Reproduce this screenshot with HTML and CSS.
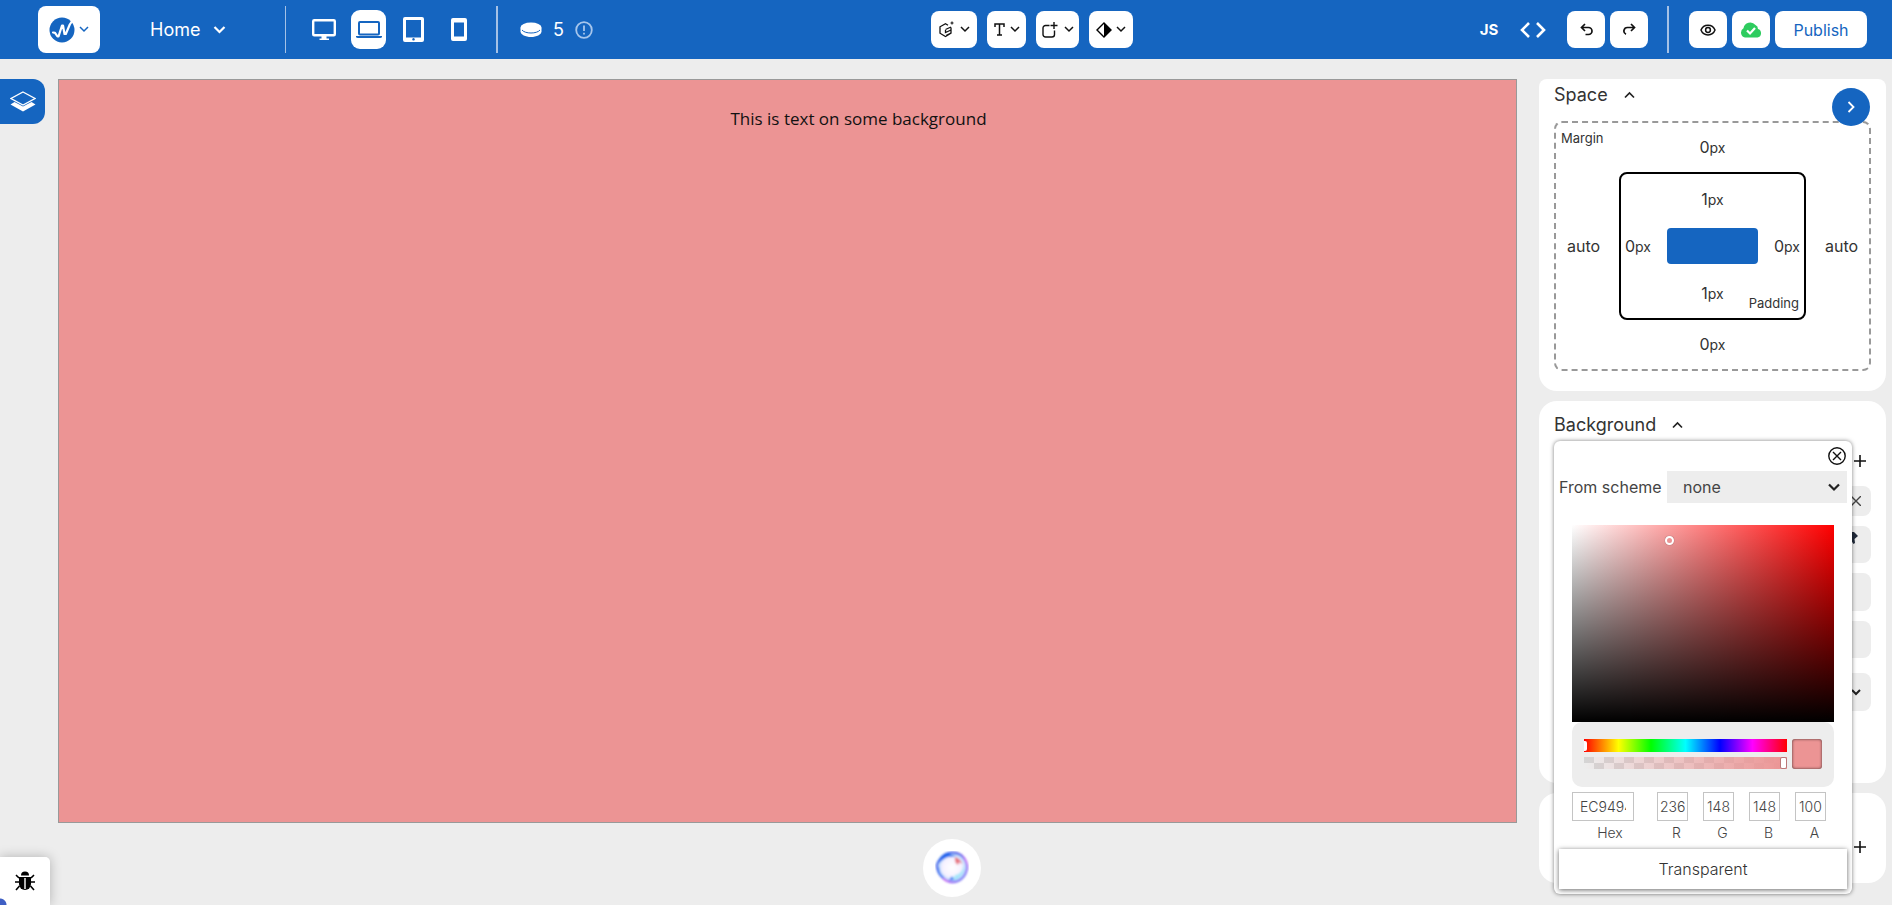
FILE: index.html
```html
<!DOCTYPE html>
<html lang="en">
<head>
<meta charset="utf-8">
<title>Site editor</title>
<link rel="stylesheet" href="styles.css">
</head>
<body>
<svg class="defs" aria-hidden="true">
  <symbol id="chev" viewBox="0 0 10 10"><path d="M1 3l4 4 4-4" fill="none" stroke="currentColor" stroke-width="1.5"/></symbol>
  <symbol id="plus" viewBox="0 0 12 12"><path d="M6 0v12M0 6h12" stroke="currentColor" stroke-width="1.6"/></symbol>
</svg>
<header class="topbar">
  <div class="group left">
    <button class="tile logo" aria-label="Main menu">
      <svg width="26" height="26" viewBox="0 0 26 26"><circle cx="13" cy="13" r="12.5" fill="#1565c0"/><path d="M4 15.500l2 .3 2.500 3.700 1 0 3.500-11 1 0 1.500 8.500 1.300 0 4-9.500 2-3" fill="none" stroke="#fff" stroke-width="2.200" stroke-linejoin="round" stroke-linecap="round"/></svg>
      <svg class="chev blue" width="10" height="10"><use href="#chev"/></svg>
    </button>
    <button class="bare page"><span>Home</span><svg width="13" height="13" viewBox="0 0 13 13"><path d="M1.500 4l5 5 5-5" fill="none" stroke="#fff" stroke-width="2.200"/></svg></button>
    <i class="divider thin"></i>
    <div class="devices">
      <button class="bare device" aria-label="Desktop"><svg width="24" height="22" viewBox="0 0 24 22"><rect x="1.200" y="1.200" width="21.600" height="15" rx="1" fill="none" stroke="#fff" stroke-width="2.400"/><path d="M9.500 17h5v2.500h2.500V21H7.500v-1.500h2z" fill="#fff"/></svg></button>
      <button class="bare device active" aria-label="Laptop"><svg width="26" height="18" viewBox="0 0 26 18"><rect x="3" y="1" width="20" height="12.500" rx="1" fill="none" stroke="#1565c0" stroke-width="2"/><path d="M0 15h26v.5q0 1.500-2 1.500H2q-2 0-2-1.500z" fill="#1565c0"/></svg></button>
      <button class="bare device" aria-label="Tablet"><svg width="21" height="25" viewBox="0 0 21 25"><path fill-rule="evenodd" d="M2 0h17a2 2 0 0 1 2 2v21a2 2 0 0 1-2 2H2a2 2 0 0 1-2-2V2a2 2 0 0 1 2-2zm1 3v17.500h15V3zm7.500 18a1.300 1.300 0 1 0 .01 0z" fill="#fff"/></svg></button>
      <button class="bare device" aria-label="Phone"><svg width="16" height="23" viewBox="0 0 16 23"><path fill-rule="evenodd" d="M2 0h12a2 2 0 0 1 2 2v19a2 2 0 0 1-2 2H2a2 2 0 0 1-2-2V2a2 2 0 0 1 2-2zm1 4.500v14h10v-14z" fill="#fff"/></svg></button>
    </div>
    <i class="divider"></i>
    <div class="credits">
      <svg width="22" height="16" viewBox="0 0 22 16"><ellipse cx="11" cy="5.500" rx="10.500" ry="5" fill="#fff"/><path d="M.5 6v3.500c0 3 5 5.500 10.500 5.500s10.500-2.500 10.500-5.500V6z" fill="#fff"/><path d="M2 8c3 4 15 4 18 0" fill="none" stroke="#1565c0" stroke-width="1"/></svg>
      <span>5</span>
      <svg width="18" height="18" viewBox="0 0 18 18" stroke="#a7c6ec" fill="none" stroke-width="1.800"><circle cx="9" cy="9" r="7.800"/><path d="M9 4.500v5.500M9 11.700v1.800"/></svg>
    </div>
  </div>
  <div class="group tools">
    <button class="tile tool box" aria-label="Add block"><svg width="15" height="17" viewBox="0 0 15 17" fill="none" stroke="#111" stroke-width="1.300"><path d="M9 4.200L6.500 2.700 1 5.800v6.400l5.500 3.300 5.500-3.300V6.500M6.500 8.500L12 6M6.500 9v2.500L12 9M7 14.500l5-2.500"/><path d="M13 .5v3M11.500 2h3" stroke-width="1.100"/></svg><svg class="chev" width="10" height="10"><use href="#chev"/></svg></button>
    <button class="tile tool text" aria-label="Add text"><svg width="11" height="13" viewBox="0 0 11 13" fill="none" stroke="#111" stroke-width="1.500"><path d="M1 4V1h9v3M5.500 1v11M3 12h5"/></svg><svg class="chev" width="10" height="10"><use href="#chev"/></svg></button>
    <button class="tile tool shape" aria-label="Add container"><svg width="16" height="16" viewBox="0 0 16 16" fill="none" stroke="#111" stroke-width="1.400"><path d="M7.500 3.500H3.500a2.500 2.500 0 0 0-2.500 2.500v6.500A2.500 2.500 0 0 0 3.500 15H10a2.500 2.500 0 0 0 2.500-2.500V8.500M12 0v7M8.500 3.500h7"/></svg><svg class="chev" width="10" height="10"><use href="#chev"/></svg></button>
    <button class="tile tool theme" aria-label="Colour scheme"><svg width="16" height="16" viewBox="0 0 16 16"><path d="M8 1l7 7-7 7-7-7z" fill="none" stroke="#000" stroke-width="1.400"/><path d="M8 1l7 7-7 7z"/></svg><svg class="chev" width="10" height="10"><use href="#chev"/></svg></button>
  </div>
  <div class="group right">
    <button class="bare js">JS</button>
    <button class="bare code" aria-label="Code"><svg width="26" height="16" viewBox="0 0 26 16" fill="none" stroke="#fff" stroke-width="2.600"><path d="M9 1L2 8l7 7M17 1l7 7-7 7"/></svg></button>
    <div class="pair">
      <button class="tile action" aria-label="Undo"><svg width="13" height="13" viewBox="0 0 13 13" fill="none" stroke="#111" stroke-width="1.700"><path d="M5 1L1.500 4.500 5 8M1.500 4.500H8.500a3.500 3.500 0 0 1 0 7H5.500"/></svg></button>
      <button class="tile action" aria-label="Redo"><svg width="13" height="13" viewBox="0 0 13 13" fill="none" stroke="#111" stroke-width="1.700"><path d="M8 1l3.500 3.500L8 8M11.500 4.500H4.500a3.500 3.500 0 0 0-1.500 6.700"/></svg></button>
    </div>
    <i class="divider"></i>
    <div class="pair">
      <button class="tile action" aria-label="Preview"><svg width="16" height="12" viewBox="0 0 16 12" fill="none" stroke="#111" stroke-width="1.500"><path d="M1 6c2.500-6.500 11.500-6.500 14 0-2.500 6.500-11.500 6.500-14 0z"/><circle cx="8" cy="6" r="2.400"/></svg></button>
      <button class="tile action" aria-label="Saved"><svg width="22" height="16" viewBox="0 0 22 16"><path d="M5 15.500a5 5 0 0 1-1.500-9.200A6.800 6.800 0 0 1 15.500 3a4.500 4.500 0 0 1 2.500 4 4.400 4.400 0 0 1-.5 8.500z" fill="#2ecc5f"/><path d="M7 8.500l3 3 5-5.500" fill="none" stroke="#fff" stroke-width="2.200"/></svg></button>
      <button class="tile publish">Publish</button>
    </div>
  </div>
</header>
<div class="workspace">
  <main class="stage">
    <div class="rail"><button class="layers" aria-label="Layers"><svg width="26" height="21" viewBox="0 0 26 21"><path d="M13 1l12 6.500L13 14 1 7.500z" fill="none" stroke="#fff" stroke-width="1.300"/><path d="M.5 13.500L4.500 11l8.500 4.500 8.500-4.500 4 2.500L13 20.500z" fill="#fff"/></svg></button></div>
    <section class="canvas"><p>This is text on some background</p></section>
  </main>
  <aside class="sidebar">
    <section class="card first">
      <h2>Space <svg width="11" height="8" viewBox="0 0 11 8"><path d="M1 6.500l4.500-4.500L10 6.500" fill="none" stroke="#222" stroke-width="1.700"/></svg></h2>
      <button class="collapse" aria-label="Collapse panel"><svg width="8" height="12" viewBox="0 0 8 12"><path d="M1.500 1l5 5-5 5" fill="none" stroke="#fff" stroke-width="1.800"/></svg></button>
      <div class="margin-box">
        <span class="tag margin-tag">Margin</span>
        <span class="top">0<small>px</small></span>
        <span class="side">auto</span>
        <div class="padding-box">
          <span class="top">1<small>px</small></span>
          <span class="side">0<small>px</small></span>
          <i class="core"></i>
          <span class="side">0<small>px</small></span>
          <span class="top">1<small>px</small></span>
          <span class="tag padding-tag">Padding</span>
        </div>
        <span class="side end">auto</span>
        <span class="top">0<small>px</small></span>
      </div>
    </section>
    <section class="card background">
      <h2>Background <svg width="11" height="8" viewBox="0 0 11 8"><path d="M1 6.500l4.500-4.500L10 6.500" fill="none" stroke="#222" stroke-width="1.700"/></svg></h2>
      <div class="fields">
        <button class="bare add" aria-label="Add background"><svg width="12" height="12"><use href="#plus"/></svg></button>
        <div class="field short"><svg width="10" height="10" viewBox="0 0 10 10"><path d="M0 0l10 10M10 0L0 10" stroke="#444" stroke-width="1.400"/></svg></div>
        <div class="field drop"><svg width="12" height="12" viewBox="0 0 12 12"><path d="M2 0h6l4 4-3.500 3 .5 4-1.500 1-2-3z" fill="#222b3b"/></svg></div>
        <div class="field"></div>
        <div class="field last"></div>
        <div class="field"><svg width="10" height="8" viewBox="0 0 10 8"><path d="M1 2l4 4 4-4" fill="none" stroke="#222" stroke-width="2"/></svg></div>
      </div>
      <div class="picker">
        <button class="bare close" aria-label="Close"><svg width="18" height="18" viewBox="0 0 18 18" fill="none" stroke="#111" stroke-width="1.400"><circle cx="9" cy="9" r="8.200"/><path d="M5 5l8 8M13 5l-8 8"/></svg></button>
        <div class="scheme">
          <label for="scheme">From scheme</label>
          <div class="select"><select id="scheme"><option>none</option></select><svg width="12" height="9" viewBox="0 0 12 9"><path d="M1 1.500l5 5 5-5" fill="none" stroke="#222" stroke-width="2.200"/></svg></div>
        </div>
        <div class="picker-body">
          <div class="shade"><i class="cursor"></i></div>
          <div class="sliders">
            <div class="tracks">
              <input class="hue" type="range" aria-label="Hue" min="0" max="360" value="0">
              <input class="alpha" type="range" aria-label="Opacity" min="0" max="100" value="100">
            </div>
            <i class="swatch"></i>
          </div>
          <div class="values">
            <label class="hex"><input value="EC9494"><span>Hex</span></label>
            <label><input value="236"><span>R</span></label>
            <label><input value="148"><span>G</span></label>
            <label><input value="148"><span>B</span></label>
            <label><input value="100"><span>A</span></label>
          </div>
        </div>
        <button class="transparent">Transparent</button>
      </div>
    </section>
    <section class="card extra"><button class="bare add" aria-label="Add item"><svg width="12" height="12"><use href="#plus"/></svg></button></section>
  </aside>
</div>
<button class="assistant" aria-label="Assistant">
  <svg width="34" height="34" viewBox="0 0 34 34">
    <defs><linearGradient id="orb" x1="0" y1="0" x2="1" y2="1"><stop offset="0" stop-color="#1268ec"/><stop offset=".4" stop-color="#3b3be6"/><stop offset=".6" stop-color="#c35af5"/><stop offset="1" stop-color="#4b7df5"/></linearGradient>
    <radialGradient id="glow"><stop offset="0" stop-color="#fff"/><stop offset=".65" stop-color="#f6f1ff"/><stop offset="1" stop-color="#a5d4fb"/></radialGradient>
    <filter id="soft"><feGaussianBlur stdDeviation="0.9"/></filter></defs>
    <g filter="url(#soft)"><path d="M11 3q8-3 15 1 7 6 6 14-2 9-9 12-8 3-14-2Q2 22 2 14q3-8 9-11z" fill="url(#glow)" stroke="url(#orb)" stroke-width="2"/><path d="M4 12q3-7 9-9l8 2q-4 1-8 1-4 1-9 6z" fill="#1769ee"/><path d="M20 6q6 2 7 7l-3-2-1 3q-4-3-3-8z" fill="#e4525e" opacity=".8"/><path d="M29 14q1 9-7 14l-5 1 3-5q7-1 9-10z" fill="#64dff5" opacity=".5"/><path d="M4 15q0 8 5 11l-1 1q-7-4-4-12zM14 29l3-4 2 4z" fill="#237cf5"/></g>
  </svg>
</button>
<button class="debug" aria-label="Debug"><svg width="20" height="20" viewBox="0 0 20 20"><path d="M6 4.500a4 4 0 0 1 8 0z"/><path d="M4 6h12v7a6 6 0 0 1-12 0z"/><path d="M4 7L1 4M16 7l3-3M4 11H0M16 11h4M4.500 15L1 19M15.500 15l3.500 4" stroke="#000" stroke-width="1.600"/><path d="M10 7v11" stroke="#fff" stroke-width="1.400"/></svg></button>
</body>
</html>
```

FILE: styles.css
```css
* { box-sizing: border-box; }
body { margin: 0; height: 100vh; display: flex; flex-direction: column; overflow: hidden; background: #ededed; color: #333; font: 16px/24px Inter, "Open Sans", sans-serif; }
button, input, select { font: inherit; color: inherit; }
button { padding: 0; border: 0; background: none; cursor: pointer; display: flex; align-items: center; justify-content: center; }
svg { flex: none; display: block; }
.defs { position: absolute; width: 0; height: 0; }

.topbar { flex: none; height: 59px; display: flex; align-items: center; justify-content: space-between; padding: 0 25px 0 38px; background: #1565c0; color: #fff; }
.group { display: flex; align-items: center; }
.left { width: 564px; }
.tile { height: 37px; background: #fff; border-radius: 8px; color: #111; }
.logo { width: 62px; height: 47px; gap: 4px; }
.blue { color: #1565c0; }
.page { width: 76px; margin: 0 59px 0 50px; justify-content: space-between; font-size: 18px; }
.divider { width: 2px; height: 47px; background: #a4c1e6; }
.thin { width: 1px; }
.devices { display: flex; align-items: center; gap: 10px; margin: 0 20px; }
.device { width: 35px; height: 39px; border-radius: 9px; }
.active { background: #fff; }
.credits { display: flex; align-items: center; gap: 11px; margin-left: 22px; font-size: 18px; }

.tools { gap: 10px; margin-right: 18px; }
.tool { gap: 6px; }
.box { width: 46px; }
.text { width: 39px; gap: 5px; }
.shape { width: 43px; }
.theme { width: 44px; gap: 4px; }
.chev { margin-bottom: 2px; }

.js { font-weight: 700; font-size: 15px; width: 18px; }
.code { margin: 0 21px 0 22px; }
.pair { display: flex; gap: 5px; }
.action { width: 38px; }
.right .divider { margin: 0 20px 0 19px; }
.publish { width: 92px; color: #1565c0; }

.workspace { flex: 1; min-height: 0; display: flex; gap: 22px; padding: 20px 6px 0 0; }
.stage { flex: 1; display: flex; padding-bottom: 82px; }
.rail { width: 58px; }
.layers { width: 45px; height: 45px; background: #1565c0; border-radius: 0 12px 12px 0; }
.canvas { flex: 1; padding-left: 142px; background: #ec9494; border: 1px solid #999; color: #111; text-align: center; }
.canvas p { margin: 26px 0; font: 17px/26px "Open Sans", sans-serif; }

.sidebar { width: 347px; display: flex; flex-direction: column; gap: 10px; }
.card { position: relative; padding: 12px 15px; background: #fff; border-radius: 18px; }
.card h2 { display: flex; align-items: center; gap: 16px; margin: 0; font-size: 18px; line-height: 24px; font-weight: 400; }
.first { padding: 4px 15px 20px; border-radius: 8px 8px 18px 18px; }
.collapse { position: absolute; z-index: 1; top: 9px; right: 16px; width: 38px; height: 38px; border-radius: 50%; background: #1565c0; }
.margin-box { position: relative; margin-top: 14px; height: 250px; display: grid; grid-template: 49px 148px 49px / 63px 1fr 63px; align-items: center; justify-items: center; border: 2px dashed #999; border-radius: 8px; }
.top { grid-column: 1 / -1; }
.top small, .side small { font-size: 14px; }
.side { justify-self: start; width: 55px; text-align: center; }
.end { justify-self: end; }
.tag { position: absolute; font-size: 13px; line-height: 18px; }
.margin-tag { top: 6px; left: 5px; }
.padding-tag { right: 5px; bottom: 6px; }
.padding-box { position: relative; width: 187px; height: 148px; display: grid; grid-template: 50px 1fr 50px / 34px 1fr 34px; align-items: center; justify-items: center; border: 2px solid #000; border-radius: 8px; }
.padding-box .side { width: 34px; }
.core { width: 91px; height: 36px; background: #1565c0; border-radius: 4px; }

.background { padding-bottom: 72px; }
.fields { display: flex; flex-direction: column; gap: 10px; margin-top: 18px; }
.add { width: 12px; height: 12px; margin: 0 5px 9px auto; color: #111; }
.field { height: 38px; padding-right: 10px; display: flex; align-items: center; justify-content: flex-end; background: #ededed; border-radius: 8px; }
.short { height: 30px; }
.drop { height: 37px; padding-right: 13px; padding-bottom: 14px; }
.last { height: 37px; margin-bottom: 5px; }
.extra { padding: 48px 15px 21px; }

.picker { position: absolute; z-index: 2; top: 40px; left: 15px; width: 298px; padding: 6px 5px 5px; background: #fff; border-radius: 6px; box-shadow: 0 0 4px rgba(0,0,0,.5); color: #444; }
.close { margin: 0 1px 6px auto; }
.scheme { display: flex; align-items: center; justify-content: space-between; white-space: nowrap; }
.select { position: relative; width: 180px; }
.select select { appearance: none; display: block; width: 100%; height: 32px; padding: 0 16px; border: 0; border-radius: 0; background: #ededed; }
.select svg { position: absolute; right: 7px; top: 12px; pointer-events: none; }
.picker-body { padding: 22px 13px 0; }
.shade { position: relative; height: 197px; background: linear-gradient(to top, #000, transparent), linear-gradient(to right, #fff, #f00); }
.cursor { position: absolute; left: 37%; top: 8%; width: 9px; height: 9px; margin: -5px 0 0 -4px; border: 2px solid #fff; border-radius: 50%; box-shadow: 0 0 1px #555; }
.sliders { display: flex; gap: 5px; height: 65px; padding: 17px 12px 18px; background: #ededed; border-radius: 10px; }
.tracks { flex: 1; display: flex; flex-direction: column; gap: 5px; }
.tracks input { appearance: none; display: block; width: 100%; height: 13px; margin: 0; }
.tracks .hue { background: linear-gradient(to right, #f00, #ff0 17%, #0f0 33%, #0ff 50%, #00f 67%, #f0f 83%, #f00); }
.tracks .alpha { height: 12px; background: linear-gradient(to right, transparent, #ec9494), conic-gradient(#ededed 25%, #d5d5d5 0 50%, #ededed 0 75%, #d5d5d5 0) 0 0 / 20px 12px; }
.tracks input::-webkit-slider-thumb { appearance: none; width: 7px; height: 12px; background: #fff; border: 1px solid #ba7777; border-radius: 2px; }
.tracks .hue::-webkit-slider-thumb { width: 3px; height: 10px; border: 0; border-radius: 0 2px 2px 0; }
.swatch { width: 30px; height: 30px; background: #ec9494; border-radius: 3px; box-shadow: inset 0 0 3px rgba(0,0,0,.7); }
.values { display: flex; justify-content: space-between; padding: 5px 8px 0 0; font-weight: 300; }
.values label { width: 31px; }
.values .hex { width: 62px; margin-right: 8px; }
.values input { display: block; width: 100%; height: 29px; padding: 0 2px; border: 1px solid #c4c4c4; border-radius: 0; background: #fff; font-size: 14px; text-align: center; }
.values .hex input { padding: 0 7px; text-align: left; }
.values span { display: block; padding-left: 8px; text-align: center; font-size: 14px; line-height: 24px; }
.values .hex span { padding-left: 14px; }
.transparent { width: 100%; height: 40px; margin-top: 4px; background: #fff; box-shadow: 0 1px 5px rgba(0,0,0,.6); font-weight: 300; color: #333; }

.assistant { position: absolute; bottom: 8px; left: calc(50% - 23px); width: 58px; height: 58px; background: #fff; border-radius: 50%; }
.debug { position: absolute; left: 0; bottom: 0; width: 50px; height: 48px; background: radial-gradient(circle at 0 100%, #3f5fc4 6px, #fff 7px); border-radius: 0 5px 0 0; box-shadow: 0 0 12px rgba(0,0,0,.25); }
```
